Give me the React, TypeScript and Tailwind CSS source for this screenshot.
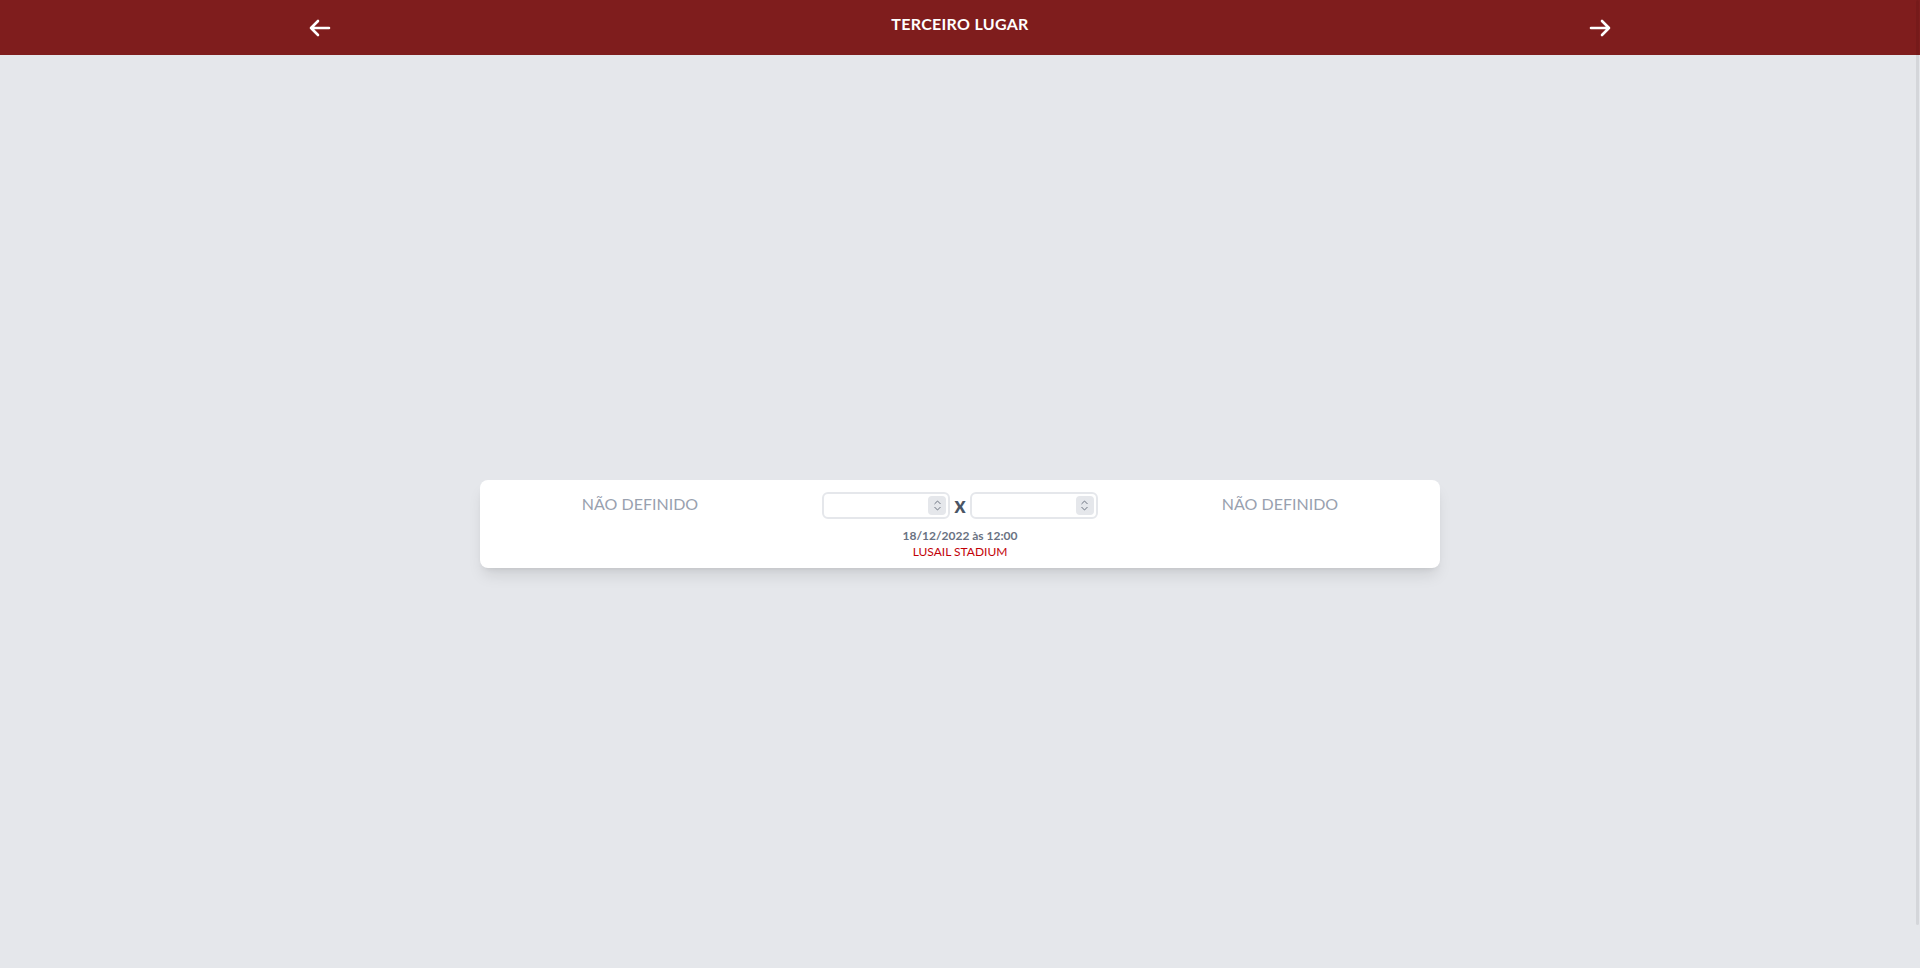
import { ReactNode } from 'react';

function Arrow({ dir }: { dir: 'left' | 'right' }) {
  const d = dir === 'left' ? 'M10 19l-7-7m0 0l7-7m-7 7h18' : 'M14 5l7 7m0 0l-7 7m7-7H3';
  return (
    <svg viewBox="0 0 24 24" fill="none" stroke="currentColor" strokeWidth={2.6} strokeLinecap="round" strokeLinejoin="round" className="w-7 h-7">
      <path d={d} />
    </svg>
  );
}

function ScoreInput() {
  return (
    <div className="w-32 h-[27px] rounded-md border-2 border-gray-200 bg-white flex items-center pr-[2px]">
      <input type="text" className="flex-1 min-w-0 h-full bg-transparent px-2 text-sm text-gray-700 outline-none" />
      <span className="w-[18px] h-[19px] bg-gray-200 rounded-sm flex items-center justify-center">
        <svg viewBox="0 0 10 16" className="w-[9px] h-[15px]" fill="none" stroke="#6b7280" strokeWidth={1.1} strokeLinecap="round" strokeLinejoin="round">
          <path d="M2 6l3-3 3 3" />
          <path d="M2 10l3 3 3-3" />
        </svg>
      </span>
    </div>
  );
}

function Team({ children }: { children: ReactNode }) {
  return <div className="text-center text-base text-gray-400 leading-6">{children}</div>;
}

export default function App() {
  return (
    <div className="min-h-screen bg-gray-200" style={{ fontFamily: 'Lato, "Open Sans", sans-serif' }}>
      {/* Header */}
      <header className="h-[55px] bg-[#7f1d1d] text-white">
        <div className="w-[1304px] mx-auto h-full flex items-center justify-between">
          <button className="w-6 h-7 flex items-center justify-center">
            <Arrow dir="left" />
          </button>
          <h1 className="self-start mt-[12px] text-base font-bold tracking-[0.3px]">TERCEIRO LUGAR</h1>
          <button className="w-6 h-7 flex items-center justify-center">
            <Arrow dir="right" />
          </button>
        </div>
      </header>

      {/* Match card */}
      <main className="pt-[425px]">
        <div className="w-[960px] mx-auto bg-white rounded-lg shadow-lg h-[88px] pt-3 grid grid-cols-3">
          <Team>NÃO DEFINIDO</Team>
          <div className="flex flex-col items-center">
            <div className="flex items-center gap-1">
              <ScoreInput />
              <span className="text-base font-extrabold text-gray-600 pt-0.5">X</span>
              <ScoreInput />
            </div>
            <div className="mt-[9px] text-xs font-bold text-gray-500 leading-4">18/12/2022 às 12:00</div>
            <div className="text-xs font-normal text-red-700 leading-4">LUSAIL STADIUM</div>
          </div>
          <Team>NÃO DEFINIDO</Team>
        </div>
      </main>

      {/* scrollbar thumb */}
      <div className="fixed top-0 right-[1px] w-[3px] h-[925px] rounded-full bg-black/[0.07]" />
    </div>
  );
}
